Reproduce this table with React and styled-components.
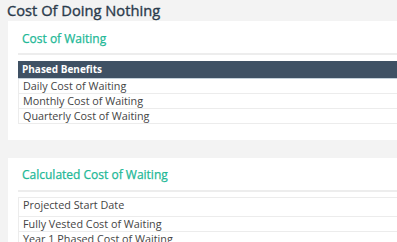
import React from "react";
import styled, { createGlobalStyle } from "styled-components";

const Global = createGlobalStyle`
  html, body { margin: 0; padding: 0; background: #f3f3f3; overflow: hidden; }
  body { font-family: "Open Sans", "Liberation Sans", sans-serif; }
`;

const Page = styled.div`
  width: 700px;
  padding: 0 0 0 8px;
`;

const PageTitle = styled.h1`
  margin: 0 0 1px -1px;
  padding-top: 1px;
  font-size: 14.7px;
  line-height: 19px;
  font-weight: 400;
  color: #2b3b4c;
  -webkit-text-stroke: 0.35px #2b3b4c;
`;

const Card = styled.section`
  background: #fff;
  margin-top: ${(p) => p.$gap}px;
  padding: 0 0 ${(p) => p.$bottom}px 10px;
`;

const CardHeader = styled.div`
  padding: ${(p) => p.$top}px 0 ${(p) => p.$bottom}px 4px;
  border-bottom: 2px solid #ededed;
`;

const CardTitle = styled.h2`
  margin: 0;
  font-size: 12px;
  line-height: 18px;
  font-weight: 400;
  color: #22b896;
  -webkit-text-stroke: 0.25px #22b896;
`;

const Table = styled.div`
  margin-top: ${(p) => p.$top}px;
`;

const HeadRow = styled.div`
  background: #3f5164;
  color: #fff;
  font-weight: 700;
  font-size: 10px;
  height: 17px;
  line-height: 17px;
  padding-left: 4px;
  border-bottom: 1px solid #c3d0da;
`;

const Row = styled.div`
  font-size: 10.8px;
  color: #444;
  height: 14px;
  line-height: 14px;
  padding: 0 0 ${(p) => p.$extra || 0}px 4px;
  border-left: 1px solid #ececec;
  border-bottom: 1px solid #ececec;
  ${(p) => p.$first && "border-top: 1px solid #ececec;"}
`;

export default function App() {
  return (
    <>
      <Global />
      <Page>
        <PageTitle>Cost Of Doing Nothing</PageTitle>
        <Card $gap={0} $bottom={16}>
          <CardHeader $top={9} $bottom={5}>
            <CardTitle>Cost of Waiting</CardTitle>
          </CardHeader>
          <Table $top={6}>
            <HeadRow>Phased Benefits</HeadRow>
            <Row>Daily Cost of Waiting</Row>
            <Row>Monthly Cost of Waiting</Row>
            <Row>Quarterly Cost of Waiting</Row>
          </Table>
        </Card>
        <Card $gap={18} $bottom={16}>
          <CardHeader $top={8} $bottom={6}>
            <CardTitle>Calculated Cost of Waiting</CardTitle>
          </CardHeader>
          <Table $top={5}>
            <Row $first $extra={4}>Projected Start Date</Row>
            <Row>Fully Vested Cost of Waiting</Row>
            <Row>Year 1 Phased Cost of Waiting</Row>
          </Table>
        </Card>
      </Page>
    </>
  );
}
